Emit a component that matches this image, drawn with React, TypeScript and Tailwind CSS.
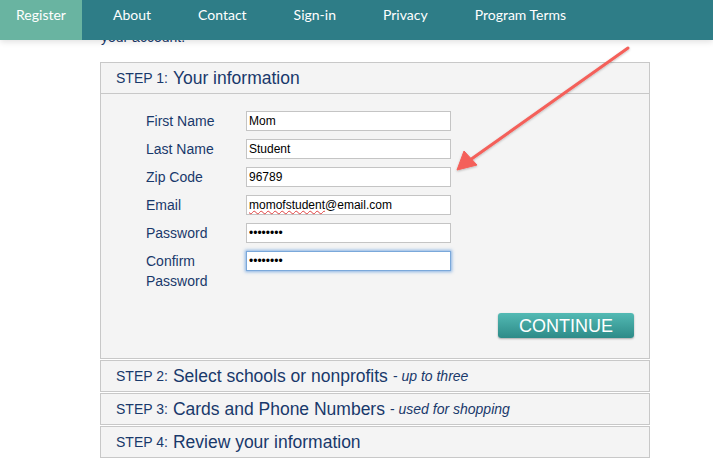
import React from 'react';

const navy = 'text-[#19396b]';

type Field = { label: React.ReactNode; value: string; type?: string; focused?: boolean };

const fields: Field[] = [
  { label: 'First Name', value: 'Mom' },
  { label: 'Last Name', value: 'Student' },
  { label: 'Zip Code', value: '96789' },
  { label: 'Email', value: 'momofstudent@email.com' },
  { label: 'Password', value: 'password', type: 'password' },
  { label: <>Confirm<br />Password</>, value: 'password', type: 'password', focused: true },
];

function StepHeader({ n, title, note }: { n: number; title: string; note?: string }) {
  return (
    <div className={`h-[30px] flex items-center px-[15px] ${navy}`}>
      <span className="text-[14px]">STEP {n}:</span>
      <span className="text-[17.5px] ml-[5px]">{title}</span>
      {note && <span className="text-[14px] ml-[5px]">- <i>{note}</i></span>}
    </div>
  );
}

export default function App() {
  return (
    <div className="relative w-[713px] h-[470px] bg-white overflow-hidden" style={{ fontFamily: '"Liberation Sans", Arial, sans-serif' }}>
      {/* top nav overlays the page */}
      <nav
        className="absolute top-0 left-0 right-0 h-[40px] bg-[#2e7d87] flex items-stretch text-white text-[14px] leading-[18px] shadow-[0_2px_6px_rgba(0,0,0,0.12)] z-10"
        style={{ fontFamily: 'Lato, "Open Sans", sans-serif' }}
      >
        <div className="w-[82px] bg-[#69b4a1] flex justify-center pt-[6px]">Register</div>
        <div className="flex gap-[47px] ml-[31px] pt-[6px]">
          <span>About</span>
          <span>Contact</span>
          <span>Sign-in</span>
          <span>Privacy</span>
          <span>Program Terms</span>
        </div>
      </nav>

      <div className="pt-[28px] pl-[100px] w-[650px]">
        <p className={`text-[14px] leading-[18px] pl-[1px] ${navy}`}>your account.</p>

        <div className="mt-[16px] border border-[#c8c8c8] bg-[#f4f4f4]">
          <StepHeader n={1} title="Your information" />
          <div className="border-t border-[#c8c8c8] pt-[17px] pb-[20px] pl-[45px] pr-[15px]">
            <div className="flex flex-col gap-[8px]">
              {fields.map((f, i) => (
                <div key={i} className="flex items-start">
                  <label className={`w-[100px] text-[14px] leading-[20px] ${navy}`}>{f.label}</label>
                  <div className="relative h-[20px]">
                    <input
                      readOnly
                      type={f.type ?? 'text'}
                      value={f.value}
                      className={`block w-[205px] h-[20px] px-[2px] text-[12px] text-black bg-white border outline-none ${f.focused ? 'border-[#7aa8da] shadow-[0_0_3px_1px_rgba(90,150,220,0.7)]' : 'border-[#c4c4c4]'}`}
                    />
                    {i === 3 && (
                      <span className="absolute left-[3px] top-[2px] text-[12px] leading-[14px] text-transparent underline decoration-wavy decoration-[#e04040] decoration-1 underline-offset-[2px] pointer-events-none">
                        momofstudent
                      </span>
                    )}
                  </div>
                </div>
              ))}
            </div>
            <div className="flex justify-end mt-[22px]">
              <button className="w-[136px] h-[25px] rounded-[3px] bg-gradient-to-b from-[#53bab4] to-[#2d8b88] text-white text-[18px] leading-none shadow-[0_1px_2px_rgba(0,0,0,0.3)]">
                CONTINUE
              </button>
            </div>
          </div>
        </div>

        <div className="mt-[1px] border border-[#c8c8c8] bg-[#f4f4f4]">
          <StepHeader n={2} title="Select schools or nonprofits" note="up to three" />
        </div>
        <div className="mt-[1px] border border-[#c8c8c8] bg-[#f4f4f4]">
          <StepHeader n={3} title="Cards and Phone Numbers" note="used for shopping" />
        </div>
        <div className="mt-[1px] border border-[#c8c8c8] bg-[#f4f4f4]">
          <StepHeader n={4} title="Review your information" />
        </div>
      </div>

      {/* annotation arrow */}
      <svg className="absolute left-0 top-0 pointer-events-none z-20" width="713" height="470">
        <defs>
          <filter id="sh" x="-10%" y="-10%" width="120%" height="120%">
            <feDropShadow dx="0" dy="1" stdDeviation="1" floodColor="#000" floodOpacity="0.25" />
          </filter>
        </defs>
        <g filter="url(#sh)" fill="#f4605a" stroke="#f4605a">
          <line x1="628" y1="48" x2="470" y2="160" strokeWidth="3" strokeLinecap="round" />
          <polygon points="457,170 464,151 477,165" strokeWidth="1" strokeLinejoin="round" />
        </g>
      </svg>
    </div>
  );
}
